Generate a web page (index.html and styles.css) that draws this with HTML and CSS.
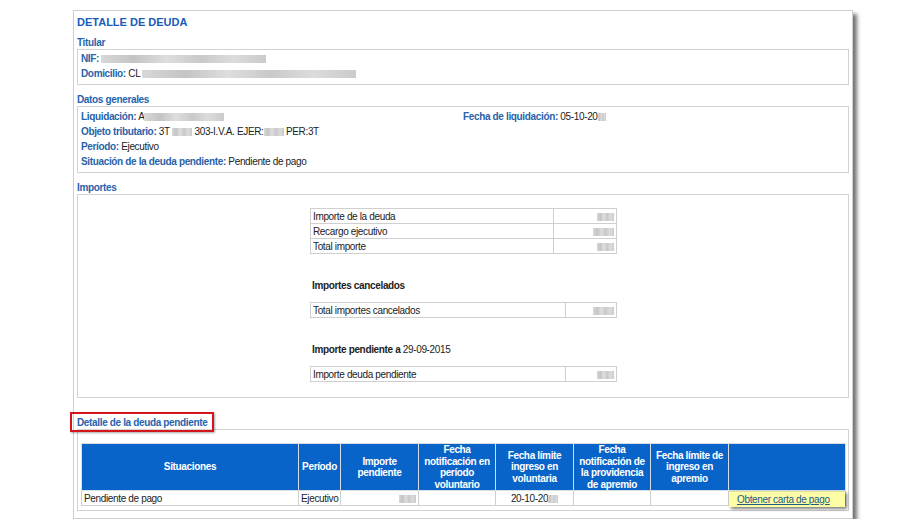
FILE: index.html
```html
<!DOCTYPE html>
<html lang="es">
<head>
<meta charset="utf-8">
<title>Detalle de deuda</title>
<link rel="stylesheet" href="styles.css">
</head>
<body>
<div class="panel">
  <h1 class="title">DETALLE DE DEUDA</h1>

  <h2 class="sec">Titular</h2>
  <div class="box box-titular">
    <div class="row"><b class="lbl">NIF:</b> <span class="blur w165"></span></div>
    <div class="row"><b class="lbl">Domicilio:</b> CL <span class="blur w214"></span></div>
  </div>

  <h2 class="sec">Datos generales</h2>
  <div class="box box-datos">
    <div class="row grid2">
      <div><b class="lbl">Liquidación:</b> A<span class="blur w80"></span></div>
      <div><b class="lbl">Fecha de liquidación:</b> 05-10-20<span class="blur w8"></span></div>
    </div>
    <div class="row"><b class="lbl">Objeto tributario:</b> 3T <span class="blur w20"></span> 303-I.V.A. EJER:<span class="blur w20"></span> PER:3T</div>
    <div class="row"><b class="lbl">Período:</b> Ejecutivo</div>
    <div class="row"><b class="lbl">Situación de la deuda pendiente:</b> Pendiente de pago</div>
  </div>

  <h2 class="sec">Importes</h2>
  <div class="box box-importes">
    <div class="imp">
      <table class="itable t1">
        <tr><td class="c1">Importe de la deuda</td><td class="c2"><span class="blur w17"></span></td></tr>
        <tr><td class="c1">Recargo ejecutivo</td><td class="c2"><span class="blur w21"></span></td></tr>
        <tr><td class="c1">Total importe</td><td class="c2"><span class="blur w17"></span></td></tr>
      </table>
      <p class="subh">Importes cancelados</p>
      <table class="itable t2">
        <tr><td class="c1">Total importes cancelados</td><td class="c2"><span class="blur w21"></span></td></tr>
      </table>
      <p class="subh">Importe pendiente a <span class="norm">29-09-2015</span></p>
      <table class="itable t2">
        <tr><td class="c1">Importe deuda pendiente</td><td class="c2"><span class="blur w17"></span></td></tr>
      </table>
    </div>
  </div>

  <h2 class="sec sec-last"><span class="mark">Detalle de la deuda pendiente</span></h2>
  <div class="box box-detalle">
    <table class="dtable">
      <colgroup>
        <col class="k1"><col class="k2"><col class="k3"><col class="k4"><col class="k5"><col class="k6"><col class="k7"><col class="k8">
      </colgroup>
      <thead>
        <tr>
          <th>Situaciones</th>
          <th>Período</th>
          <th>Importe pendiente</th>
          <th>Fecha notificación en período voluntario</th>
          <th>Fecha límite ingreso en voluntaria</th>
          <th>Fecha notificación de la providencia de apremio</th>
          <th>Fecha límite de ingreso en apremio</th>
          <th></th>
        </tr>
      </thead>
      <tbody>
        <tr>
          <td>Pendiente de pago</td>
          <td>Ejecutivo</td>
          <td class="r"><span class="blur w17"></span></td>
          <td></td>
          <td class="c">20-10-20<span class="blur w10"></span></td>
          <td></td>
          <td></td>
          <td class="btncell"><a class="carta" href="#">Obtener carta de pago</a></td>
        </tr>
      </tbody>
    </table>
  </div>
</div>
</body>
</html>
```

FILE: styles.css
```css
html, body {
  margin: 0;
  padding: 0;
  background: #ffffff;
}

body {
  font-family: "Liberation Sans", Arial, sans-serif;
  font-size: 10px;
  letter-spacing: -0.35px;
  color: #222222;
}

.panel {
  margin: 10px 0 0 73px;
  width: 772px;
  padding: 4px 3px 7px 3px;
  border: 1px solid #cfcfcf;
  box-shadow: 4px 4px 4px rgba(0, 0, 0, 0.55);
  background: #ffffff;
}

.title {
  margin: 0;
  font-family: "Liberation Sans", Arial, sans-serif;
  font-size: 11px;
  letter-spacing: 0;
  font-weight: bold;
  line-height: 14px;
  color: #1a5cb8;
}

.sec {
  margin: 7px 0 0 0;
  font-size: 10px;
  font-weight: bold;
  line-height: 13px;
  color: #2563ad;
}

.box {
  border: 1px solid #d2d2d2;
  padding: 2px 3px 3px 3px;
  margin-top: 0;
}

.box + .sec {
  margin-top: 8px;
}

.row {
  line-height: 15px;
  height: 15px;
  white-space: nowrap;
}

.lbl {
  color: #2a62a8;
  font-weight: bold;
}

.box-titular {
  padding-top: 1px;
}

.box-datos {
  padding-top: 2px;
}

.grid2 {
  display: grid;
  grid-template-columns: 382px 1fr;
}

.blur {
  display: inline-block;
  height: 8px;
  vertical-align: -1px;
  background: linear-gradient(90deg, #d8d8d8 0%, #c4c4c4 20%, #dedede 40%, #c9c9c9 60%, #dcdcdc 80%, #cbcbcb 100%);
  filter: blur(0.7px);
}

.w8 { width: 8px; }
.w10 { width: 10px; }
.w17 { width: 17px; }
.w20 { width: 20px; }
.w21 { width: 21px; }
.w80 { width: 80px; }
.w165 { width: 165px; }
.w214 { width: 214px; }

/* Importes */
.box-importes {
  padding: 13px 0 15px 0;
  display: flex;
  justify-content: center;
}

.imp {
  width: 306px;
}

.itable {
  width: 306px;
  border-collapse: collapse;
  table-layout: fixed;
  color: #222222;
}

.itable td {
  border: 1px solid #cfcfcf;
  height: 14px;
  padding: 0 2px;
  line-height: 13px;
  white-space: nowrap;
}

.itable .c2 {
  text-align: right;
}

.t1 .c1 { width: 238px; }
.t1 .c2 { width: 58px; }
.t2 .c1 { width: 250px; }
.t2 .c2 { width: 46px; }

.subh {
  margin: 25px 0 9px 2px;
  line-height: 14px;
  font-weight: bold;
  color: #222222;
}

.subh .norm {
  font-weight: normal;
}

/* Detalle */
.box + .sec.sec-last {
  margin-top: 19px;
  line-height: 12px;
}

.mark {
  position: relative;
  display: inline-block;
}

.mark::after {
  content: "";
  position: absolute;
  left: -7px;
  top: -5px;
  right: -7px;
  bottom: -3px;
  border: 2px solid #d4161c;
  box-shadow: 1px 1px 2px rgba(0, 0, 0, 0.35);
}

.box-detalle {
  padding: 13px 3px 4px 3px;
}

.dtable {
  width: 764px;
  border-collapse: collapse;
  table-layout: fixed;
}

.k1 { width: 217px; }
.k2 { width: 42px; }
.k3 { width: 78px; }
.k4 { width: 77px; }
.k5 { width: 78px; }
.k6 { width: 77px; }
.k7 { width: 78px; }
.k8 { width: 117px; }

.dtable th {
  background: #0864c9;
  color: #ffffff;
  font-weight: bold;
  font-size: 10px;
  line-height: 11.5px;
  height: 44px;
  padding: 0 3px;
  text-align: center;
  vertical-align: middle;
  border: 1px solid #d6dde6;
}

.dtable td {
  border: 1px solid #cfcfcf;
  height: 14px;
  line-height: 13px;
  padding: 0 2px;
  white-space: nowrap;
  color: #222222;
}

.dtable td.r { text-align: right; }
.dtable td.c { text-align: center; }

.btncell {
  position: relative;
}

.carta {
  position: absolute;
  left: 0;
  top: 0;
  width: 116px;
  height: 16px;
  box-sizing: border-box;
  padding-left: 8px;
  line-height: 15px;
  background: #fdfda6;
  color: #1e5a84;
  text-decoration: underline;
  box-shadow: 2px 2px 3px rgba(0, 0, 0, 0.5);
  border-top: 1px solid #e2e2a0;
}
```
